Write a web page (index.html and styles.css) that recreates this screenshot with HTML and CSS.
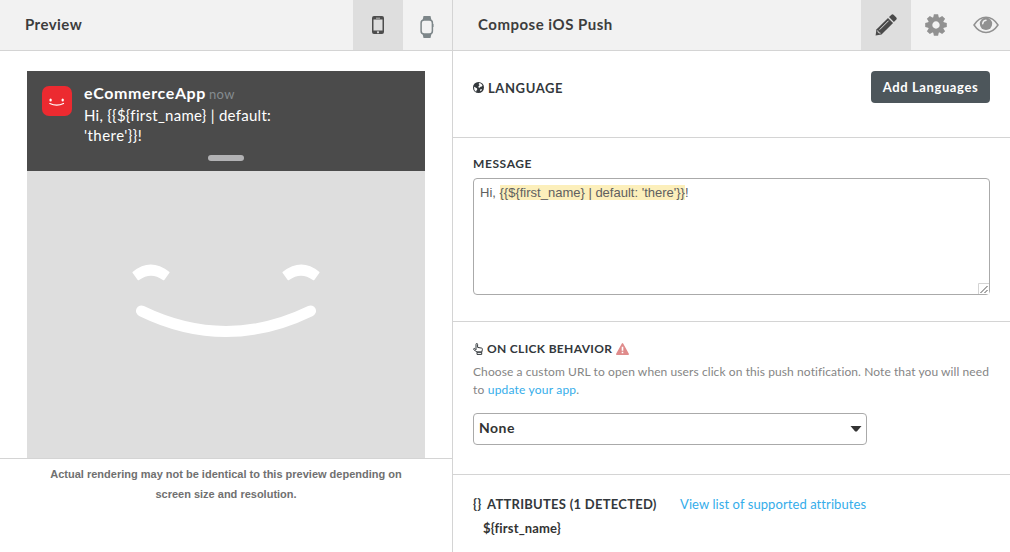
FILE: index.html
```html
<!DOCTYPE html>
<html lang="en">
<head>
<meta charset="utf-8">
<title>Compose iOS Push</title>
<link rel="stylesheet" href="styles.css">
</head>
<body>
<main class="composer">
  <section class="preview">
    <header class="bar">
      <h1 class="bar-title preview-title"><span>Preview</span></h1>
      <button class="tab tab-active" aria-label="Phone">
        <svg width="12" height="18" viewBox="0 0 12 18"><path fill="#4d4d4d" fill-rule="evenodd" d="M2 0h8q2 0 2 2v14q0 2-2 2H2q-2 0-2-2V2q0-2 2-2zM1.500 3.500v11h9v-11zM4 1.700v.7h4v-.7zM6 15.200a1 1 0 1 0 .01 0z"/></svg>
      </button>
      <button class="tab tab-watch" aria-label="Watch">
        <svg width="14" height="22" viewBox="0 0 14 22"><path fill="#7d8689" d="M3.500 0h7l1 4.500h-9zM2.500 17.500h9l-1 4.500h-7z"/><rect x="1.100" y="4.100" width="11.300" height="13.800" rx="3" fill="#f2f2f2" stroke="#7d8689" stroke-width="1.500"/><path fill="#7d8689" d="M12.500 8h1v3h-1z"/></svg>
      </button>
    </header>
    <div class="screen-wrap">
      <div class="screen">
        <div class="notification">
          <svg class="app-icon" width="30" height="30" viewBox="0 0 30 30"><rect width="30" height="30" rx="7" fill="#ec2a30"/><ellipse cx="8.600" cy="14" rx="1.200" ry="1.600" fill="#fff"/><ellipse cx="20.700" cy="14" rx="1.200" ry="1.600" fill="#fff"/><path d="M7.800 17.500q7 3.300 13.700 0" fill="none" stroke="#fff" stroke-width="1.200" stroke-linecap="round"/></svg>
          <div class="note">
            <div class="note-head"><span class="app-name">eCommerceApp</span><span class="note-time">now</span></div>
            <div class="note-text"><span class="note-line1">Hi, {{${first_name} | default:</span><br><span class="note-line2">'there'}}!</span></div>
          </div>
          <div class="grabber"></div>
        </div>
        <div class="face">
          <svg width="188" height="74" viewBox="0 0 188 74"><g fill="none" stroke="#fff"><g stroke-linejoin="round" stroke-width="2" fill="#fff"><path d="M1.500 8.500Q18.500-5.500 36.500 8.500L31.500 15.300Q19 6 6.500 15.300z"/><path d="M151.500 8.500Q169.500-5.500 186.500 8.500L181.500 15.300Q169 6 156.500 15.300z"/></g><path d="M9.500 47Q94 88 178.500 47" stroke-width="11" stroke-linecap="round"/></g></svg>
        </div>
      </div>
    </div>
    <p class="disclaimer">Actual rendering may not be identical to this preview depending on<br>screen size and resolution.</p>
  </section>

  <section class="compose">
    <header class="bar">
      <h1 class="bar-title compose-title"><span>Compose iOS Push</span></h1>
      <button class="tab tab-active" aria-label="Edit">
        <svg width="22" height="22" viewBox="0 0 22 22"><path fill="#4a4a4a" d="M16.200.9q1.300-1.300 2.600 0l2.300 2.300q1.300 1.300 0 2.600l-2.200 2.200-4.900-4.900z"/><path fill="#4a4a4a" d="M13 3.900l5.100 5.100L6.500 20.600.6 21.400l.8-5.900z"/><path d="M4.600 15.700l9-9M2.700 16.500l.7 2.100 2.100.6M13.500 3.600l4.900 4.900" fill="none" stroke="#dedede" stroke-width="1"/></svg>
      </button>
      <button class="tab" aria-label="Settings">
        <svg width="22" height="22" viewBox="-11 -11 22 22"><g fill="#919191"><path id="teeth" d="M-2.100-10.800h4.200l.8 3.800h-5.800zM-2.900 7h5.800l-.8 3.800h-4.200z"/><use href="#teeth" transform="rotate(45)"/><use href="#teeth" transform="rotate(90)"/><use href="#teeth" transform="rotate(135)"/></g><circle r="5.900" fill="none" stroke="#919191" stroke-width="4.400"/></svg>
      </button>
      <button class="tab tab-last" aria-label="View">
        <svg width="26" height="18" viewBox="0 0 26 18"><path d="M1 9Q6 1.300 13 1.300T25 9Q20 16.500 13 16.500T1 9z" fill="none" stroke="#919191" stroke-width="1.500"/><circle cx="13" cy="7.800" r="6.200" fill="#919191"/><path d="M9.700 7.700q.2-3.200 3.300-3.500" fill="none" stroke="#f2f2f2" stroke-width="1.400" stroke-linecap="round"/></svg>
      </button>
    </header>

    <section class="row language">
      <h2 class="label"><svg width="11" height="11" viewBox="0 0 11 11"><circle cx="5.500" cy="5.500" r="5.500" fill="#33383c"/><path fill="#fff" d="M5.900.9l2 .6 1.600 1.700-.7 1.400-1.400.1-.6 1.100-1.500-.6.400-1.200 1-.9-.9-.6zM1 4.700l1.600.7 1.500 1.200.1 1.200-.9 1-.2 1.100L1.400 8zM7.300 7.300l1.600-.2-.5 1.600-1.300.6z"/></svg><span class="label-language">LANGUAGE</span></h2>
      <button class="add"><span>Add Languages</span></button>
    </section>

    <section class="row message">
      <h2 class="label"><span class="label-message">MESSAGE</span></h2>
      <div class="editor"><span class="editor-text">Hi, <mark>{{${first_name} | default: 'there'}}</mark>!</span>
        <svg class="resize" width="11" height="11" viewBox="0 0 11 11"><path d="M0 11V0h11v11z" fill="#fff"/><path d="M.5 11V.5H11" fill="none" stroke="#d4d4d4"/><path d="M2.500 10l7-7M6.500 10l3-3" fill="none" stroke="#555"/></svg>
      </div>
    </section>

    <section class="row click">
      <h2 class="label"><svg width="10" height="12" viewBox="0 0 10 12"><path d="M3 6.800V1.400q0-.9.800-.9t.8.9v3l4 .7q.9.200.8 1.200L8.800 9H4L.8 6.700q-.5-.6 0-1.100.5-.4 1 0zM4 9.200h4.700v2.200H4z" fill="none" stroke="#33383c" stroke-linejoin="round"/></svg><span class="label-click">ON CLICK BEHAVIOR</span><svg width="13" height="12" viewBox="0 0 13 12"><path d="M6.500.8l5.700 10.400H.8z" fill="#df8b8b" stroke="#df8b8b" stroke-width="1.500" stroke-linejoin="round"/><path d="M6.500 3.800v4M6.500 8.700v1.500" stroke="#fff" stroke-width="1.600"/></svg></h2>
      <p class="help"><span class="help1">Choose a custom URL to open when users click on this push notification. Note that you will need</span><br><span class="help2">to <a>update your app</a>.</span></p>
      <div class="select"><span>None</span><svg width="12" height="6" viewBox="0 0 12 6"><path d="M.5 0h11L6.800 5.500H5.200z" fill="#333"/></svg></div>
    </section>

    <section class="attributes">
      <div class="attr-head">
        <h2 class="label label-attr"><span class="braces">{}</span><span>ATTRIBUTES (1 DETECTED)</span></h2>
        <a class="attr-link">View list of supported attributes</a>
      </div>
      <div class="attr"><span>${first_name}</span></div>
    </section>
  </section>
</main>
</body>
</html>
```
FILE: styles.css
```css
* { box-sizing: border-box; }
body { margin: 0; background: #fff; font-family: Lato, "Liberation Sans", sans-serif; color: #333; }
h1, h2, p { margin: 0; }
button { border: 0; padding: 0; font: inherit; }
svg { display: block; flex: none; }
span, a { white-space: nowrap; }

.composer { display: grid; grid-template-columns: 453px 557px; height: 552px; overflow: hidden; }
.preview { border-right: 1px solid #d4d4d4; }
.bar { display: flex; height: 51px; background: #f2f2f2; border-bottom: 1px solid #d4d4d4; }
.bar-title { flex: 1; padding-left: 25px; font-size: 15px; line-height: 49px; font-weight: 700; color: #3d3d3d; }
.preview-title { letter-spacing: .45px; }
.compose-title { letter-spacing: .5px; }
.tab { display: flex; width: 50px; height: 50px; align-items: center; justify-content: center; background: transparent; }
.tab-active { background: #dedede; }
.tab-watch { width: 49px; padding: 4px 2px 0 0; }
.tab-last { width: 49px; }

.screen-wrap { padding: 20px 27px 0; border-bottom: 1px solid #d4d4d4; }
.screen { display: flex; flex-direction: column; height: 387px; background: #dedede; }
.notification { display: grid; grid-template: 81px 19px / 30px 1fr; column-gap: 12px; padding: 0 15px; height: 100px; background: #4b4b4b; color: #fff; }
.app-icon { margin-top: 15px; }
.note { padding-top: 12px; }
.note-head { display: flex; align-items: baseline; gap: 3px; height: 22px; line-height: 20px; }
.app-name { font-size: 16px; font-weight: 700; letter-spacing: .63px; }
.note-time { font-size: 13px; color: #858b90; letter-spacing: .3px; }
.note-text { font-size: 15px; line-height: 20px; }
.note-line1 { letter-spacing: .28px; }
.note-line2 { letter-spacing: .45px; }
.grabber { grid-column: 1 / 3; justify-self: center; margin-top: 3px; width: 36px; height: 6px; border-radius: 3px; background: #b2b2b4; }
.face { display: flex; justify-content: center; padding-top: 93px; }
.disclaimer { padding-top: 5px; font-family: "Liberation Sans", Arial, sans-serif; font-size: 11px; line-height: 20px; font-weight: 700; text-align: center; color: #707070; }

.row { border-bottom: 1px solid #d4d4d4; padding: 0 20px; }
.label { display: flex; align-items: center; gap: 4px; font-size: 12px; line-height: 16px; font-weight: 700; color: #33383c; }
.label-language { font-size: 13px; letter-spacing: .6px; }
.label-message { letter-spacing: .6px; }
.label-click { letter-spacing: .33px; }
.language { display: flex; justify-content: space-between; height: 87px; padding-top: 20px; }
.language .label { height: 33px; }
.add { width: 119px; height: 32px; padding-bottom: 1px; border-radius: 4px; background: #4d565b; color: #fff; font-size: 13px; font-weight: 700; letter-spacing: .6px; }
.message { height: 184px; padding-top: 18px; }
.editor { position: relative; height: 117px; margin-top: 6px; padding: 5px 6px; border: 1px solid #aaa; border-radius: 4px; font-family: "Liberation Sans", Arial, sans-serif; font-size: 13px; line-height: 18px; color: #606060; }
.editor mark { background: #fcefbb; color: inherit; }
.resize { position: absolute; right: 0; bottom: 0; }
.click { height: 153px; padding-top: 19px; }
.help { margin-top: 6px; font-size: 12px; line-height: 18px; color: #858585; }
.help1 { letter-spacing: .09px; }
.help2 { letter-spacing: .2px; }
a { color: #35adea; }
.select { display: flex; align-items: center; justify-content: space-between; width: 394px; height: 32px; margin-top: 14px; padding: 0 4px 0 5px; border: 1px solid #aaa; border-radius: 4px; font-size: 14px; font-weight: 700; }
.select span { padding-bottom: 3px; letter-spacing: .5px; }
.attributes { padding: 19px 20px 0; }
.attr-head { display: flex; height: 20px; align-items: center; }
.attr-head .label { width: 207px; }
.label-attr { font-size: 13px; letter-spacing: .27px; }
.braces { width: 10px; }
.attr-link { font-size: 13px; letter-spacing: .08px; }
.attr { padding: 5px 0 0 10px; font-size: 13px; line-height: 18px; font-weight: 700; letter-spacing: .15px; }
```
